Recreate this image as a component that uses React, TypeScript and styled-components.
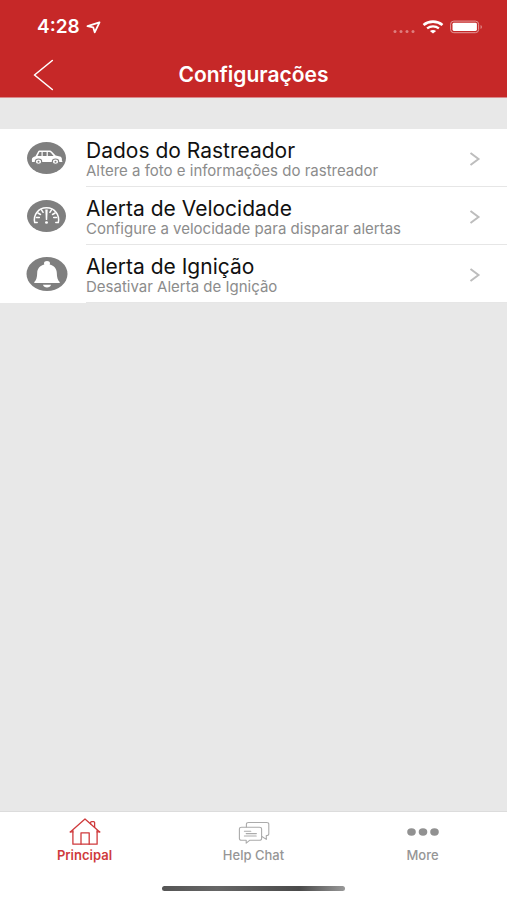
import React from "react";
import styled, { createGlobalStyle } from "styled-components";

const GlobalStyle = createGlobalStyle`
  *, *::before, *::after { box-sizing: border-box; }
  body {
    margin: 0;
    background: #e8e8e8;
    font-family: Inter, "Liberation Sans", sans-serif;
  }
  button { font: inherit; }
`;

const Screen = styled.div`
  display: flex;
  flex-direction: column;
  min-height: 100vh;
  background: #e8e8e8;
`;

const Header = styled.header`
  background: #c62828;
  color: #fff;
  border-bottom: 1px solid #d98a8c;
`;

const StatusBar = styled.div`
  display: flex;
  justify-content: space-between;
  align-items: center;
  height: 52px;
  padding: 2px 24px 0 37px;
`;

const StatusGroup = styled.div<{ $gap: number }>`
  display: flex;
  align-items: center;
  gap: ${(p) => p.$gap}px;
`;

const Clock = styled.span`
  font-size: 19px;
  line-height: 24px;
  font-weight: 600;
`;

const NavBar = styled.div`
  display: grid;
  grid-template-columns: 56px 1fr 56px;
  align-items: center;
  height: 45px;
  padding: 0 16px;
`;

const BackButton = styled.button`
  display: flex;
  align-items: center;
  height: 44px;
  padding: 0 16px;
  border: 0;
  background: none;
  color: inherit;
  cursor: pointer;
`;

const Title = styled.h1`
  margin: 0;
  font-size: 21px;
  line-height: 24px;
  font-weight: 600;
  text-align: center;
`;

const Main = styled.main`
  flex: 1;
  padding-top: 31px;
`;

const List = styled.ul`
  margin: 0;
  padding: 0;
  list-style: none;
  background: #fff;
`;

const Row = styled.button`
  display: flex;
  align-items: stretch;
  width: 100%;
  padding: 0 0 0 26px;
  border: 0;
  background: none;
  text-align: left;
  cursor: pointer;
`;

const RowIcon = styled.span`
  display: flex;
  align-items: center;
  width: 60px;
`;

const RowBody = styled.span`
  display: flex;
  flex: 1;
  align-items: center;
  justify-content: space-between;
  padding: 10px 26px 7px 0;
  border-bottom: 1px solid #e6e6e6;
`;

const RowText = styled.span`
  display: flex;
  flex-direction: column;
`;

const RowTitle = styled.span`
  font-size: 21px;
  line-height: 24px;
  color: #111;
`;

const RowSubtitle = styled.span`
  font-size: 15px;
  line-height: 16px;
  color: #8c8c8c;
`;

const TabArea = styled.footer`
  display: flex;
  flex-direction: column;
  align-items: center;
  background: #fff;
  border-top: 1px solid #dcdcdc;
`;

const TabBar = styled.nav`
  display: grid;
  grid-template-columns: repeat(3, 1fr);
  width: 100%;
`;

const Tab = styled.button<{ $active?: boolean }>`
  display: flex;
  flex-direction: column;
  align-items: center;
  padding: 5px 0 12px;
  border: 0;
  background: none;
  color: ${(p) => (p.$active ? "#cf3a3c" : "#969696")};
  font-size: 13px;
  line-height: 16px;
  font-weight: ${(p) => (p.$active ? 600 : 500)};
  cursor: pointer;
`;

const HomeIndicator = styled.div`
  width: 36%;
  height: 5px;
  margin: 11px 0 9px;
  border-radius: 3px;
  background: linear-gradient(90deg, #555 0%, #666 30%, #4a4a4a 75%, #999 100%);
`;

const LocationIcon = () => (
  <svg width="15" height="13" viewBox="0 0 15 13" fill="none" stroke="#fff" strokeWidth="1.8" strokeLinejoin="round" aria-hidden="true">
    <path d="M13.5 1.3 1.5 5.2l5.7 1.1 1.5 5z" />
  </svg>
);

const SignalIcon = () => (
  <svg width="24" height="14" viewBox="0 0 24 14" fill="#de7f7f" aria-hidden="true">
    {[2, 8, 14, 20].map((x) => (
      <circle key={x} cx={x + 1} cy="11.5" r="1.5" />
    ))}
  </svg>
);

const WifiIcon = () => (
  <svg width="22" height="14" viewBox="0 0 22 14" fill="none" stroke="#fff" aria-hidden="true">
    <path d="M1.5 4.9c5.4-4.4 13.6-4.4 19 0" strokeWidth="2.6" />
    <path d="M5.1 8.3c3.4-2.7 8.4-2.7 11.8 0" strokeWidth="2.3" />
    <path d="M11 13.4 7.9 11c1.8-1.5 4.4-1.5 6.2 0z" fill="#fff" stroke="none" />
  </svg>
);

const BatteryIcon = () => (
  <svg width="33" height="14" viewBox="0 0 33 14" aria-hidden="true">
    <rect x="0.6" y="1.1" width="28" height="11.6" rx="3.2" fill="none" stroke="#e39a9a" />
    <rect x="2.5" y="2.8" width="24.4" height="8.2" rx="1.4" fill="#fff" />
    <path d="M30.6 5v4c1.6-.5 1.6-3.5 0-4z" fill="#e39a9a" />
  </svg>
);

const BackIcon = () => (
  <svg width="22" height="32" viewBox="0 0 22 32" fill="none" stroke="#fff" strokeWidth="1.6" strokeLinecap="round" strokeLinejoin="round" aria-hidden="true">
    <path d="M20.3 1.5 2.5 16l17.8 14.5" />
  </svg>
);

const ChevronIcon = () => (
  <svg width="12" height="16" viewBox="0 0 12 16" fill="none" stroke="#bdbdbd" strokeWidth="2" aria-hidden="true">
    <path d="M1.5 2l8 6-8 6" />
  </svg>
);

const CarIcon = () => (
  <svg width="40" height="34" viewBox="0 0 40 34" aria-hidden="true">
    <ellipse cx="20.5" cy="17" rx="19.5" ry="16" fill="#7f7f7f" />
    <path
      fill="#fff"
      d="M9.5 15.2 11.8 11c.5-.9 1.2-1.4 2.2-1.4h9.200c1.200 0 2 .3 2.800 1.200l3.600 3.800 4.300.9c1.300.3 2 1.300 2 2.500v1.700c.5.2.6.5.5.9-.1.4-.4.5-.9.5H6.900c-.6 0-1-.4-1-.9v-2c0-1.400 1.400-2.500 3.600-3z"
    />
    <g fill="#7f7f7f">
      <path d="M13.500 11h2v4h-4z" />
      <path d="M16.700 11h3.900v4h-3.900z" />
      <path d="M21.800 11h1.500c.6 0 1 .2 1.400.6l2.900 3.400h-5.800z" />
    </g>
    <g fill="#fff" stroke="#7f7f7f" strokeWidth="1.1">
      <ellipse cx="12.5" cy="20.7" rx="3.2" ry="2.7" />
      <ellipse cx="29.5" cy="20.7" rx="3.2" ry="2.7" />
    </g>
    <g fill="#7f7f7f">
      <circle cx="12.5" cy="20.7" r="1" />
      <circle cx="29.5" cy="20.7" r="1" />
    </g>
  </svg>
);

const GaugeIcon = () => (
  <svg width="40" height="34" viewBox="0 0 40 34" aria-hidden="true">
    <ellipse cx="20.5" cy="17" rx="19.5" ry="16" fill="#7f7f7f" />
    <g fill="none" stroke="#fff" strokeWidth="1.5" strokeLinecap="round">
      <path d="M11.2 23.6H8.7c-1.7-7.3 3.3-14.8 11.8-14.8s13.5 7.5 11.8 14.8h-2.5" />
      <path d="M10.5 18.5h2.8M11.9 14l2.6 1.5M15.5 10.9l1.6 2.4M30.5 18.5h-2.8M29.1 14l-2.6 1.5M25.5 10.9l-1.6 2.4" />
    </g>
    <path d="M19.3 10.5h2.4l-.5 10.5h-1.4z" fill="#fff" />
    <ellipse cx="20.5" cy="23.5" rx="1.5" ry="1.3" fill="#fff" />
  </svg>
);

const BellIcon = () => (
  <svg width="42" height="36" viewBox="0 0 42 36" aria-hidden="true">
    <ellipse cx="21" cy="18" rx="20.5" ry="17" fill="#7f7f7f" />
    <path
      fill="#fff"
      d="M21 5c1.700 0 3 .9 3 2.300 0 .4-.1.800-.3 1.100 4.500 1.100 7 4.200 7.100 8.300.1 4.800.9 7.500 2.900 9.400v1H8.300v-1c2-1.900 2.800-4.600 2.900-9.400.1-4.100 2.600-7.200 7.100-8.300-.2-.3-.3-.7-.3-1.100C18 5.900 19.300 5 21 5z"
    />
    <path d="M17 28.800h8c-.4 1.800-2 2.700-4 2.700s-3.600-.9-4-2.700z" fill="#fff" />
  </svg>
);

const HomeIcon = () => (
  <svg width="34" height="30" viewBox="0 0 34 30" fill="none" stroke="currentColor" strokeWidth="1.3" strokeLinejoin="round" strokeLinecap="round" aria-hidden="true">
    <path d="M4.900 12.800 2.300 14.900 17 2l14.700 12.900-2.600-2.100V27.200H4.900z" />
    <path d="M2.300 14.900h2.600M29.100 14.900h2.600" />
    <path d="M13 27.200V15.800h8.200v11.400" />
    <path d="M22.600 6.800V5.600c0-.6.4-1 1-1h2c.6 0 1 .4 1 1v4.700" />
  </svg>
);

const ChatIcon = () => (
  <svg width="34" height="30" viewBox="0 0 34 30" fill="none" stroke="#ababab" strokeWidth="1.1" strokeLinejoin="round" strokeLinecap="round" aria-hidden="true">
    <path d="M4.6 10.200h17.800c1.400 0 2.200.8 2.200 1.900v9.300c0 1.100-.8 1.900-2.200 1.900H12.600L9.200 26.200v-2.900H4.600c-1.400 0-2.200-.8-2.200-1.900v-9.300c0-1.100.8-1.900 2.200-1.900z" />
    <path d="M9.400 10V7.300c0-1.100.8-1.800 2.200-1.800h18c1.400 0 2.200.7 2.200 1.800v9.400c0 1.100-.8 1.800-2.200 1.800h-.3v3.900l-4.400-2.900" />
    <path d="M7.400 14.200h6.400M9.200 16.600h10.200M7.400 19h11.800" />
  </svg>
);

const MoreIcon = () => (
  <svg width="34" height="30" viewBox="0 0 34 30" fill="#919191" aria-hidden="true">
    <ellipse cx="5.5" cy="15" rx="4.3" ry="3.7" />
    <ellipse cx="17" cy="15" rx="4.3" ry="3.7" />
    <ellipse cx="28.5" cy="15" rx="4.3" ry="3.7" />
  </svg>
);

const settings = [
  { icon: <CarIcon />, title: "Dados do Rastreador", subtitle: "Altere a foto e informações do rastreador" },
  { icon: <GaugeIcon />, title: "Alerta de Velocidade", subtitle: "Configure a velocidade para disparar alertas" },
  { icon: <BellIcon />, title: "Alerta de Ignição", subtitle: "Desativar Alerta de Ignição" },
];

export default function App() {
  return (
    <Screen>
      <GlobalStyle />
      <Header>
        <StatusBar>
          <StatusGroup $gap={6}>
            <Clock>4:28</Clock>
            <LocationIcon />
          </StatusGroup>
          <StatusGroup $gap={6}>
            <SignalIcon />
            <WifiIcon />
            <BatteryIcon />
          </StatusGroup>
        </StatusBar>
        <NavBar>
          <BackButton type="button" aria-label="Voltar">
            <BackIcon />
          </BackButton>
          <Title>Configurações</Title>
        </NavBar>
      </Header>
      <Main>
        <List>
          {settings.map((item) => (
            <li key={item.title}>
              <Row type="button">
                <RowIcon>{item.icon}</RowIcon>
                <RowBody>
                  <RowText>
                    <RowTitle>{item.title}</RowTitle>
                    <RowSubtitle>{item.subtitle}</RowSubtitle>
                  </RowText>
                  <ChevronIcon />
                </RowBody>
              </Row>
            </li>
          ))}
        </List>
      </Main>
      <TabArea>
        <TabBar>
          <Tab type="button" $active aria-current="page">
            <HomeIcon />
            Principal
          </Tab>
          <Tab type="button">
            <ChatIcon />
            Help Chat
          </Tab>
          <Tab type="button">
            <MoreIcon />
            More
          </Tab>
        </TabBar>
        <HomeIndicator />
      </TabArea>
    </Screen>
  );
}
